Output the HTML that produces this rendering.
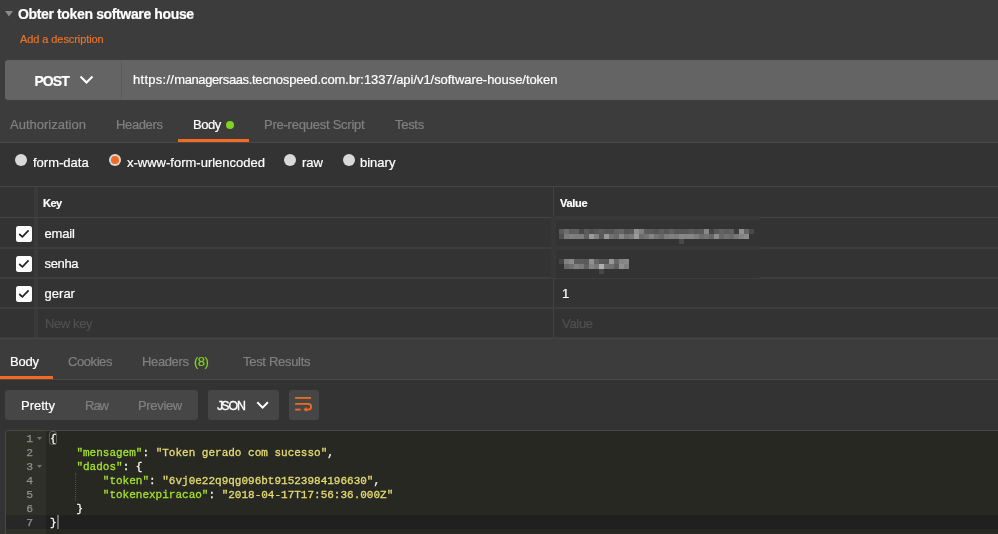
<!DOCTYPE html>
<html>
<head>
<meta charset="utf-8">
<title>Postman</title>
<style>
html,body{margin:0;padding:0;}
body{width:998px;height:534px;overflow:hidden;background:#3c3c3c;position:relative;font-family:"Liberation Sans",sans-serif;color:#fff;}
.a{position:absolute;white-space:nowrap;}
.t{position:absolute;white-space:nowrap;line-height:16px;height:16px;-webkit-text-stroke:0.2px;}
.g{color:#808080;}
.hl{position:absolute;left:0;width:998px;height:1px;background:#454545;}
.cb{position:absolute;left:16px;width:16px;height:16px;background:#fff;border-radius:2.5px;}
.cb svg{position:absolute;left:0;top:0;}
.rd{position:absolute;width:12px;height:12px;border-radius:50%;background:#d9d9d9;}
.mono{font-family:"Liberation Mono",monospace;font-size:11px;line-height:14px;height:14px;position:absolute;white-space:pre;color:#f8f8f2;-webkit-text-stroke:0.3px;}
.k{color:#a6e22e;}
.s{color:#e6db74;}
.ln{position:absolute;left:6px;width:27px;text-align:right;font-family:"Liberation Mono",monospace;font-size:11.4px;line-height:14px;height:14px;color:#8f908a;-webkit-text-stroke:0.25px;}
</style>
</head>
<body>
<div id="root" style="position:absolute;left:0;top:0;width:998px;height:534px;will-change:transform;">

<!-- title -->
<svg class="a" style="left:5px;top:11px" width="9" height="7"><path d="M0 0 L8 0 L4 5.6 Z" fill="#8a8a8a"/></svg>
<div class="t" id="title" style="left:18px;top:6px;font-size:14px;font-weight:bold;letter-spacing:-0.36px;">Obter token software house</div>
<div class="t" id="desc" style="left:20px;top:31px;font-size:11px;letter-spacing:-0.08px;color:#e8742c;">Add a description</div>

<!-- url bar -->
<div class="a" style="left:5px;top:60px;width:993px;height:40px;background:#646464;border-radius:3px 0 0 3px;"></div>
<div class="a" style="left:121px;top:61px;width:1px;height:38px;background:#5a5a5a;"></div>
<div class="t" id="post" style="left:34.4px;top:73px;font-size:14px;font-weight:bold;letter-spacing:-0.9px;">POST</div>
<svg class="a" style="left:79px;top:75px" width="15" height="10"><path d="M1.5 1.5 L7.5 7.5 L13.5 1.5" fill="none" stroke="#fff" stroke-width="2"/></svg>
<div class="t" id="url" style="left:133px;top:72px;font-size:13px;letter-spacing:-0.08px;"><span style="letter-spacing:0.27px">https://</span><span style="letter-spacing:-0.39px">managersaas.</span><span style="letter-spacing:-0.17px">tecnospeed</span><span style="letter-spacing:-0.06px">.com.br</span><span style="letter-spacing:-0.05px">:1337/api/v1/software-house/token</span></div>

<!-- request tabs -->
<div class="t g" id="tab1" style="left:10px;top:117px;font-size:13px;">Authorization</div>
<div class="t g" id="tab2" style="left:116px;top:117px;font-size:13px;letter-spacing:-0.37px;">Headers</div>
<div class="t" id="tab3" style="left:193px;top:117px;font-size:13px;letter-spacing:-0.45px;">Body</div>
<div class="a" style="left:226px;top:121px;width:8px;height:8px;border-radius:50%;background:#7fd321;"></div>
<div class="t g" id="tab4" style="left:264px;top:117px;font-size:13px;letter-spacing:-0.24px;">Pre-request Script</div>
<div class="t g" id="tab5" style="left:395px;top:117px;font-size:13px;letter-spacing:-0.3px;">Tests</div>
<div class="a" style="left:178px;top:139px;width:71px;height:3px;background:#f26b21;"></div>
<div class="hl" style="top:142px;background:#4a4a4a;"></div>

<!-- body panel -->
<div class="a" style="left:0;top:143px;width:998px;height:196px;background:#333333;"></div>

<div class="rd" style="left:15px;top:154px;"></div>
<div class="t" id="r1" style="left:33px;top:155px;font-size:13px;">form-data</div>
<div class="rd" style="left:109px;top:154px;"></div>
<div class="a" style="left:111.2px;top:156.2px;width:7.6px;height:7.6px;border-radius:50%;background:#f26b21;"></div>
<div class="t" id="r2" style="left:127px;top:155px;font-size:13px;">x-www-form-urlencoded</div>
<div class="rd" style="left:284px;top:154px;"></div>
<div class="t" id="r3" style="left:302px;top:155px;font-size:13px;">raw</div>
<div class="rd" style="left:343px;top:154px;"></div>
<div class="t" id="r4" style="left:360px;top:155px;font-size:13px;">binary</div>

<!-- table -->
<div class="a" style="left:34px;top:186px;width:4px;height:152px;background:#3a3a3a;"></div>
<div class="a" style="left:553px;top:186px;width:1px;height:152px;background:#434343;"></div>
<div class="hl" style="top:186px;"></div>
<div class="hl" style="top:217px;"></div>
<div class="hl" style="top:247px;height:2px;background:#3d3d3d;"></div>
<div class="hl" style="top:277px;height:2px;background:#3d3d3d;"></div>
<div class="hl" style="top:307px;height:2px;background:#3d3d3d;"></div>
<div class="hl" style="top:337px;background:#3b3b3b;"></div><div class="hl" style="top:338px;"></div>

<div class="t" id="hk" style="left:43px;top:195px;font-size:11px;font-weight:bold;letter-spacing:-0.5px;">Key</div>
<div class="t" id="hv" style="left:560px;top:195px;font-size:11px;font-weight:bold;letter-spacing:-0.3px;">Value</div>

<div class="cb" style="top:226px;"><svg width="16" height="16"><path d="M3.2 8 L6.4 10.9 L12.6 4.4" fill="none" stroke="#222" stroke-width="1.7"/></svg></div>
<div class="cb" style="top:256px;"><svg width="16" height="16"><path d="M3.2 8 L6.4 10.9 L12.6 4.4" fill="none" stroke="#222" stroke-width="1.7"/></svg></div>
<div class="cb" style="top:286px;"><svg width="16" height="16"><path d="M3.2 8 L6.4 10.9 L12.6 4.4" fill="none" stroke="#222" stroke-width="1.7"/></svg></div>

<div class="t" id="k1" style="left:44.6px;top:226px;font-size:13px;letter-spacing:-0.2px;">email</div>
<div class="t" id="k2" style="left:44.6px;top:256px;font-size:13px;letter-spacing:-0.36px;">senha</div>
<div class="t" id="k3" style="left:44.6px;top:286px;font-size:13px;">gerar</div>
<div class="t" id="k4" style="left:45px;top:316px;font-size:13px;color:#505050;letter-spacing:-0.38px;">New key</div>
<div class="t" id="v3" style="left:562px;top:286px;font-size:13px;">1</div>
<div class="t" id="v4" style="left:562px;top:316px;font-size:13px;color:#505050;letter-spacing:-0.3px;">Value</div>

<!-- blurred values -->
<svg class="a" style="left:548px;top:212px" width="214" height="68" shape-rendering="crispEdges"><rect x="3" y="4" width="208" height="62" fill="#333333"/><rect x="3" y="4" width="208" height="4" fill="#383838"/><rect x="3" y="34" width="208" height="4" fill="#383838"/><rect x="3" y="4" width="5" height="62" fill="#373737"/><rect x="11" y="17" width="5" height="5" fill="#5a5a5a"/><rect x="16" y="17" width="5" height="5" fill="#6e6e6e"/><rect x="21" y="17" width="5" height="5" fill="#5e5e5e"/><rect x="26" y="17" width="5" height="5" fill="#606060"/><rect x="31" y="17" width="5" height="5" fill="#484848"/><rect x="36" y="17" width="5" height="5" fill="#5a5a5a"/><rect x="41" y="17" width="5" height="5" fill="#505050"/><rect x="46" y="17" width="5" height="5" fill="#565656"/><rect x="51" y="17" width="5" height="5" fill="#5c5c5c"/><rect x="56" y="17" width="5" height="5" fill="#565656"/><rect x="61" y="17" width="5" height="5" fill="#565656"/><rect x="66" y="17" width="5" height="5" fill="#626262"/><rect x="71" y="17" width="5" height="5" fill="#666666"/><rect x="76" y="17" width="5" height="5" fill="#545454"/><rect x="81" y="17" width="5" height="5" fill="#585858"/><rect x="86" y="17" width="5" height="5" fill="#909090"/><rect x="91" y="17" width="5" height="5" fill="#808080"/><rect x="96" y="17" width="5" height="5" fill="#5c5c5c"/><rect x="101" y="17" width="5" height="5" fill="#5a5a5a"/><rect x="106" y="17" width="5" height="5" fill="#545454"/><rect x="111" y="17" width="5" height="5" fill="#5e5e5e"/><rect x="116" y="17" width="5" height="5" fill="#565656"/><rect x="121" y="17" width="5" height="5" fill="#606060"/><rect x="126" y="17" width="5" height="5" fill="#565656"/><rect x="131" y="17" width="5" height="5" fill="#565656"/><rect x="136" y="17" width="5" height="5" fill="#565656"/><rect x="141" y="17" width="5" height="5" fill="#5c5c5c"/><rect x="146" y="17" width="5" height="5" fill="#565656"/><rect x="151" y="17" width="5" height="5" fill="#5a5a5a"/><rect x="156" y="17" width="5" height="5" fill="#888888"/><rect x="161" y="17" width="5" height="5" fill="#444444"/><rect x="166" y="17" width="5" height="5" fill="#585858"/><rect x="171" y="17" width="5" height="5" fill="#626262"/><rect x="176" y="17" width="5" height="5" fill="#5c5c5c"/><rect x="181" y="17" width="5" height="5" fill="#606060"/><rect x="186" y="17" width="5" height="5" fill="#3c3c3c"/><rect x="191" y="17" width="5" height="5" fill="#909090"/><rect x="196" y="17" width="5" height="5" fill="#646464"/><rect x="201" y="17" width="5" height="5" fill="#484848"/><rect x="11" y="22" width="5" height="5" fill="#505050"/><rect x="16" y="22" width="5" height="5" fill="#7a7a7a"/><rect x="21" y="22" width="5" height="5" fill="#808080"/><rect x="26" y="22" width="5" height="5" fill="#7c7c7c"/><rect x="31" y="22" width="5" height="5" fill="#7c7c7c"/><rect x="36" y="22" width="5" height="5" fill="#5e5e5e"/><rect x="41" y="22" width="5" height="5" fill="#9a9a9a"/><rect x="46" y="22" width="5" height="5" fill="#808080"/><rect x="51" y="22" width="5" height="5" fill="#585858"/><rect x="56" y="22" width="5" height="5" fill="#989898"/><rect x="61" y="22" width="5" height="5" fill="#707070"/><rect x="66" y="22" width="5" height="5" fill="#686868"/><rect x="71" y="22" width="5" height="5" fill="#888888"/><rect x="76" y="22" width="5" height="5" fill="#707070"/><rect x="81" y="22" width="5" height="5" fill="#787878"/><rect x="86" y="22" width="5" height="5" fill="#9a9a9a"/><rect x="91" y="22" width="5" height="5" fill="#6c6c6c"/><rect x="96" y="22" width="5" height="5" fill="#747474"/><rect x="101" y="22" width="5" height="5" fill="#848484"/><rect x="106" y="22" width="5" height="5" fill="#727272"/><rect x="111" y="22" width="5" height="5" fill="#686868"/><rect x="116" y="22" width="5" height="5" fill="#7c7c7c"/><rect x="121" y="22" width="5" height="5" fill="#808080"/><rect x="126" y="22" width="5" height="5" fill="#7c7c7c"/><rect x="131" y="22" width="5" height="5" fill="#888888"/><rect x="136" y="22" width="5" height="5" fill="#868686"/><rect x="141" y="22" width="5" height="5" fill="#868686"/><rect x="146" y="22" width="5" height="5" fill="#7c7c7c"/><rect x="151" y="22" width="5" height="5" fill="#6c6c6c"/><rect x="156" y="22" width="5" height="5" fill="#727272"/><rect x="161" y="22" width="5" height="5" fill="#666666"/><rect x="166" y="22" width="5" height="5" fill="#8c8c8c"/><rect x="171" y="22" width="5" height="5" fill="#666666"/><rect x="176" y="22" width="5" height="5" fill="#707070"/><rect x="181" y="22" width="5" height="5" fill="#6a6a6a"/><rect x="186" y="22" width="5" height="5" fill="#787878"/><rect x="191" y="22" width="5" height="5" fill="#848484"/><rect x="196" y="22" width="5" height="5" fill="#8a8a8a"/><rect x="131" y="27" width="5" height="5" fill="#484848"/><rect x="11" y="47" width="5" height="5" fill="#444444"/><rect x="16" y="47" width="5" height="5" fill="#808080"/><rect x="21" y="47" width="5" height="5" fill="#8c8c8c"/><rect x="26" y="47" width="5" height="5" fill="#5c5c5c"/><rect x="31" y="47" width="5" height="5" fill="#5c5c5c"/><rect x="36" y="47" width="5" height="5" fill="#5a5a5a"/><rect x="41" y="47" width="5" height="5" fill="#909090"/><rect x="46" y="47" width="5" height="5" fill="#666666"/><rect x="51" y="47" width="5" height="5" fill="#585858"/><rect x="56" y="47" width="5" height="5" fill="#565656"/><rect x="61" y="47" width="5" height="5" fill="#989898"/><rect x="66" y="47" width="5" height="5" fill="#666666"/><rect x="71" y="47" width="5" height="5" fill="#848484"/><rect x="76" y="47" width="5" height="5" fill="#888888"/><rect x="16" y="52" width="5" height="5" fill="#686868"/><rect x="21" y="52" width="5" height="5" fill="#707070"/><rect x="26" y="52" width="5" height="5" fill="#808080"/><rect x="31" y="52" width="5" height="5" fill="#787878"/><rect x="36" y="52" width="5" height="5" fill="#606060"/><rect x="41" y="52" width="5" height="5" fill="#848484"/><rect x="46" y="52" width="5" height="5" fill="#787878"/><rect x="51" y="52" width="5" height="5" fill="#b0b0b0"/><rect x="56" y="52" width="5" height="5" fill="#747474"/><rect x="61" y="52" width="5" height="5" fill="#707070"/><rect x="66" y="52" width="5" height="5" fill="#5e5e5e"/><rect x="71" y="52" width="5" height="5" fill="#909090"/><rect x="76" y="52" width="5" height="5" fill="#808080"/><rect x="51" y="57" width="5" height="5" fill="#484848"/></svg>

<!-- response tabs -->
<div class="t" id="rt1" style="left:10px;top:354px;font-size:13px;letter-spacing:-0.2px;">Body</div>
<div class="t g" id="rt2" style="left:68px;top:354px;font-size:13px;letter-spacing:-0.43px;">Cookies</div>
<div class="t g" id="rt3" style="left:142px;top:354px;font-size:13px;letter-spacing:-0.37px;">Headers</div>
<div class="t" id="rt3b" style="left:194px;top:354px;font-size:13px;color:#7fd321;letter-spacing:-0.5px;">(8)</div>
<div class="t g" id="rt4" style="left:243px;top:354px;font-size:13px;letter-spacing:-0.3px;">Test Results</div>
<div class="a" style="left:0;top:376px;width:53px;height:3px;background:#f26b21;"></div>
<div class="hl" style="top:379px;background:#4a4a4a;"></div>

<!-- response toolbar -->
<div class="a" style="left:0;top:380px;width:998px;height:154px;background:#333333;"></div>
<div class="a" style="left:5px;top:390px;width:193px;height:30px;background:#464646;border-radius:3px;"></div>
<div class="t" id="b1" style="left:21px;top:398px;font-size:13px;">Pretty</div>
<div class="t g" id="b2" style="left:85px;top:398px;font-size:13px;letter-spacing:-1px;">Raw</div>
<div class="t g" id="b3" style="left:138px;top:398px;font-size:13px;letter-spacing:-0.33px;">Preview</div>
<div class="a" style="left:208px;top:390px;width:71px;height:30px;background:#464646;border-radius:3px;"></div>
<div class="t" id="b4" style="left:217px;top:398px;font-size:12.4px;-webkit-text-stroke:0.35px;"><span style="letter-spacing:-1.9px">J</span><span style="letter-spacing:-1.1px">SO</span>N</div>
<svg class="a" style="left:250px;top:395px" width="25" height="20"><path d="M7.3 7.3 L12.6 12.6 L17.9 7.3" fill="none" stroke="#fff" stroke-width="2"/></svg>
<div class="a" style="left:289px;top:390px;width:30px;height:30px;background:#464646;border-radius:3px;"></div>
<svg class="a" style="left:290px;top:392px" width="28" height="26" fill="none" stroke="#f26b21" stroke-width="1.8">
<path d="M5.1 5.9 H21"/><path d="M5.1 11.8 H18.2 a2.9 2.9 0 0 1 0 5.8 H16"/><path d="M5.1 17.6 H10.6"/><path d="M13.4 17.6 L16.6 15.1 V20.1 Z" fill="#f26b21" stroke="none"/>
</svg>

<!-- editor -->
<div class="a" style="left:5px;top:430px;width:993px;height:104px;background:#272822;border-radius:3px 0 0 0;border-left:1px solid #484848;border-top:1px solid #484848;box-sizing:border-box;"></div>
<div class="a" style="left:6px;top:431px;width:40px;height:103px;background:#2f3129;border-radius:2px 0 0 0;"></div>
<div class="a" style="left:46px;top:515px;width:952px;height:14px;background:#202020;"></div>
<div class="a" style="left:6px;top:515px;width:40px;height:14px;background:#272727;"></div>

<div class="ln" style="top:432px;">1</div>
<div class="ln" style="top:446px;">2</div>
<div class="ln" style="top:460px;">3</div>
<div class="ln" style="top:474px;">4</div>
<div class="ln" style="top:488px;">5</div>
<div class="ln" style="top:502px;">6</div>
<div class="ln" style="top:516px;">7</div>
<svg class="a" style="left:37px;top:437px" width="6" height="4"><path d="M0 0 H5 L2.5 3 Z" fill="#74756e"/></svg>
<svg class="a" style="left:37px;top:465px" width="6" height="4"><path d="M0 0 H5 L2.5 3 Z" fill="#74756e"/></svg>

<div class="mono" id="m1" style="left:50px;top:432px;">{</div>
<div class="mono" id="m2" style="left:50px;top:446px;">    <span class="k">"mensagem"</span>: <span class="s">"Token gerado com sucesso"</span>,</div>
<div class="mono" id="m3" style="left:50px;top:460px;">    <span class="k">"dados"</span>: {</div>
<div class="mono" id="m4" style="left:50px;top:474px;">        <span class="k">"token"</span>: <span class="s">"6vj0e22q9qg096bt91523984196630"</span>,</div>
<div class="mono" id="m5" style="left:50px;top:488px;">        <span class="k">"tokenexpiracao"</span>: <span class="s">"2018-04-17T17:56:36.000Z"</span></div>
<div class="mono" id="m6" style="left:50px;top:502px;">    }</div>
<div class="mono" id="m7" style="left:50px;top:516px;">}</div>
<div class="a" style="left:49px;top:431px;width:8px;height:14px;border:1px solid #5c5d54;border-radius:3px;box-sizing:border-box;"></div>
<div class="a" style="left:57px;top:515px;width:2px;height:14px;background:#6e6e6e;"></div>
<div class="a" style="left:75px;top:473px;width:0;height:28px;border-left:1px dotted #50514b;"></div>

</div>
</body>
</html>
